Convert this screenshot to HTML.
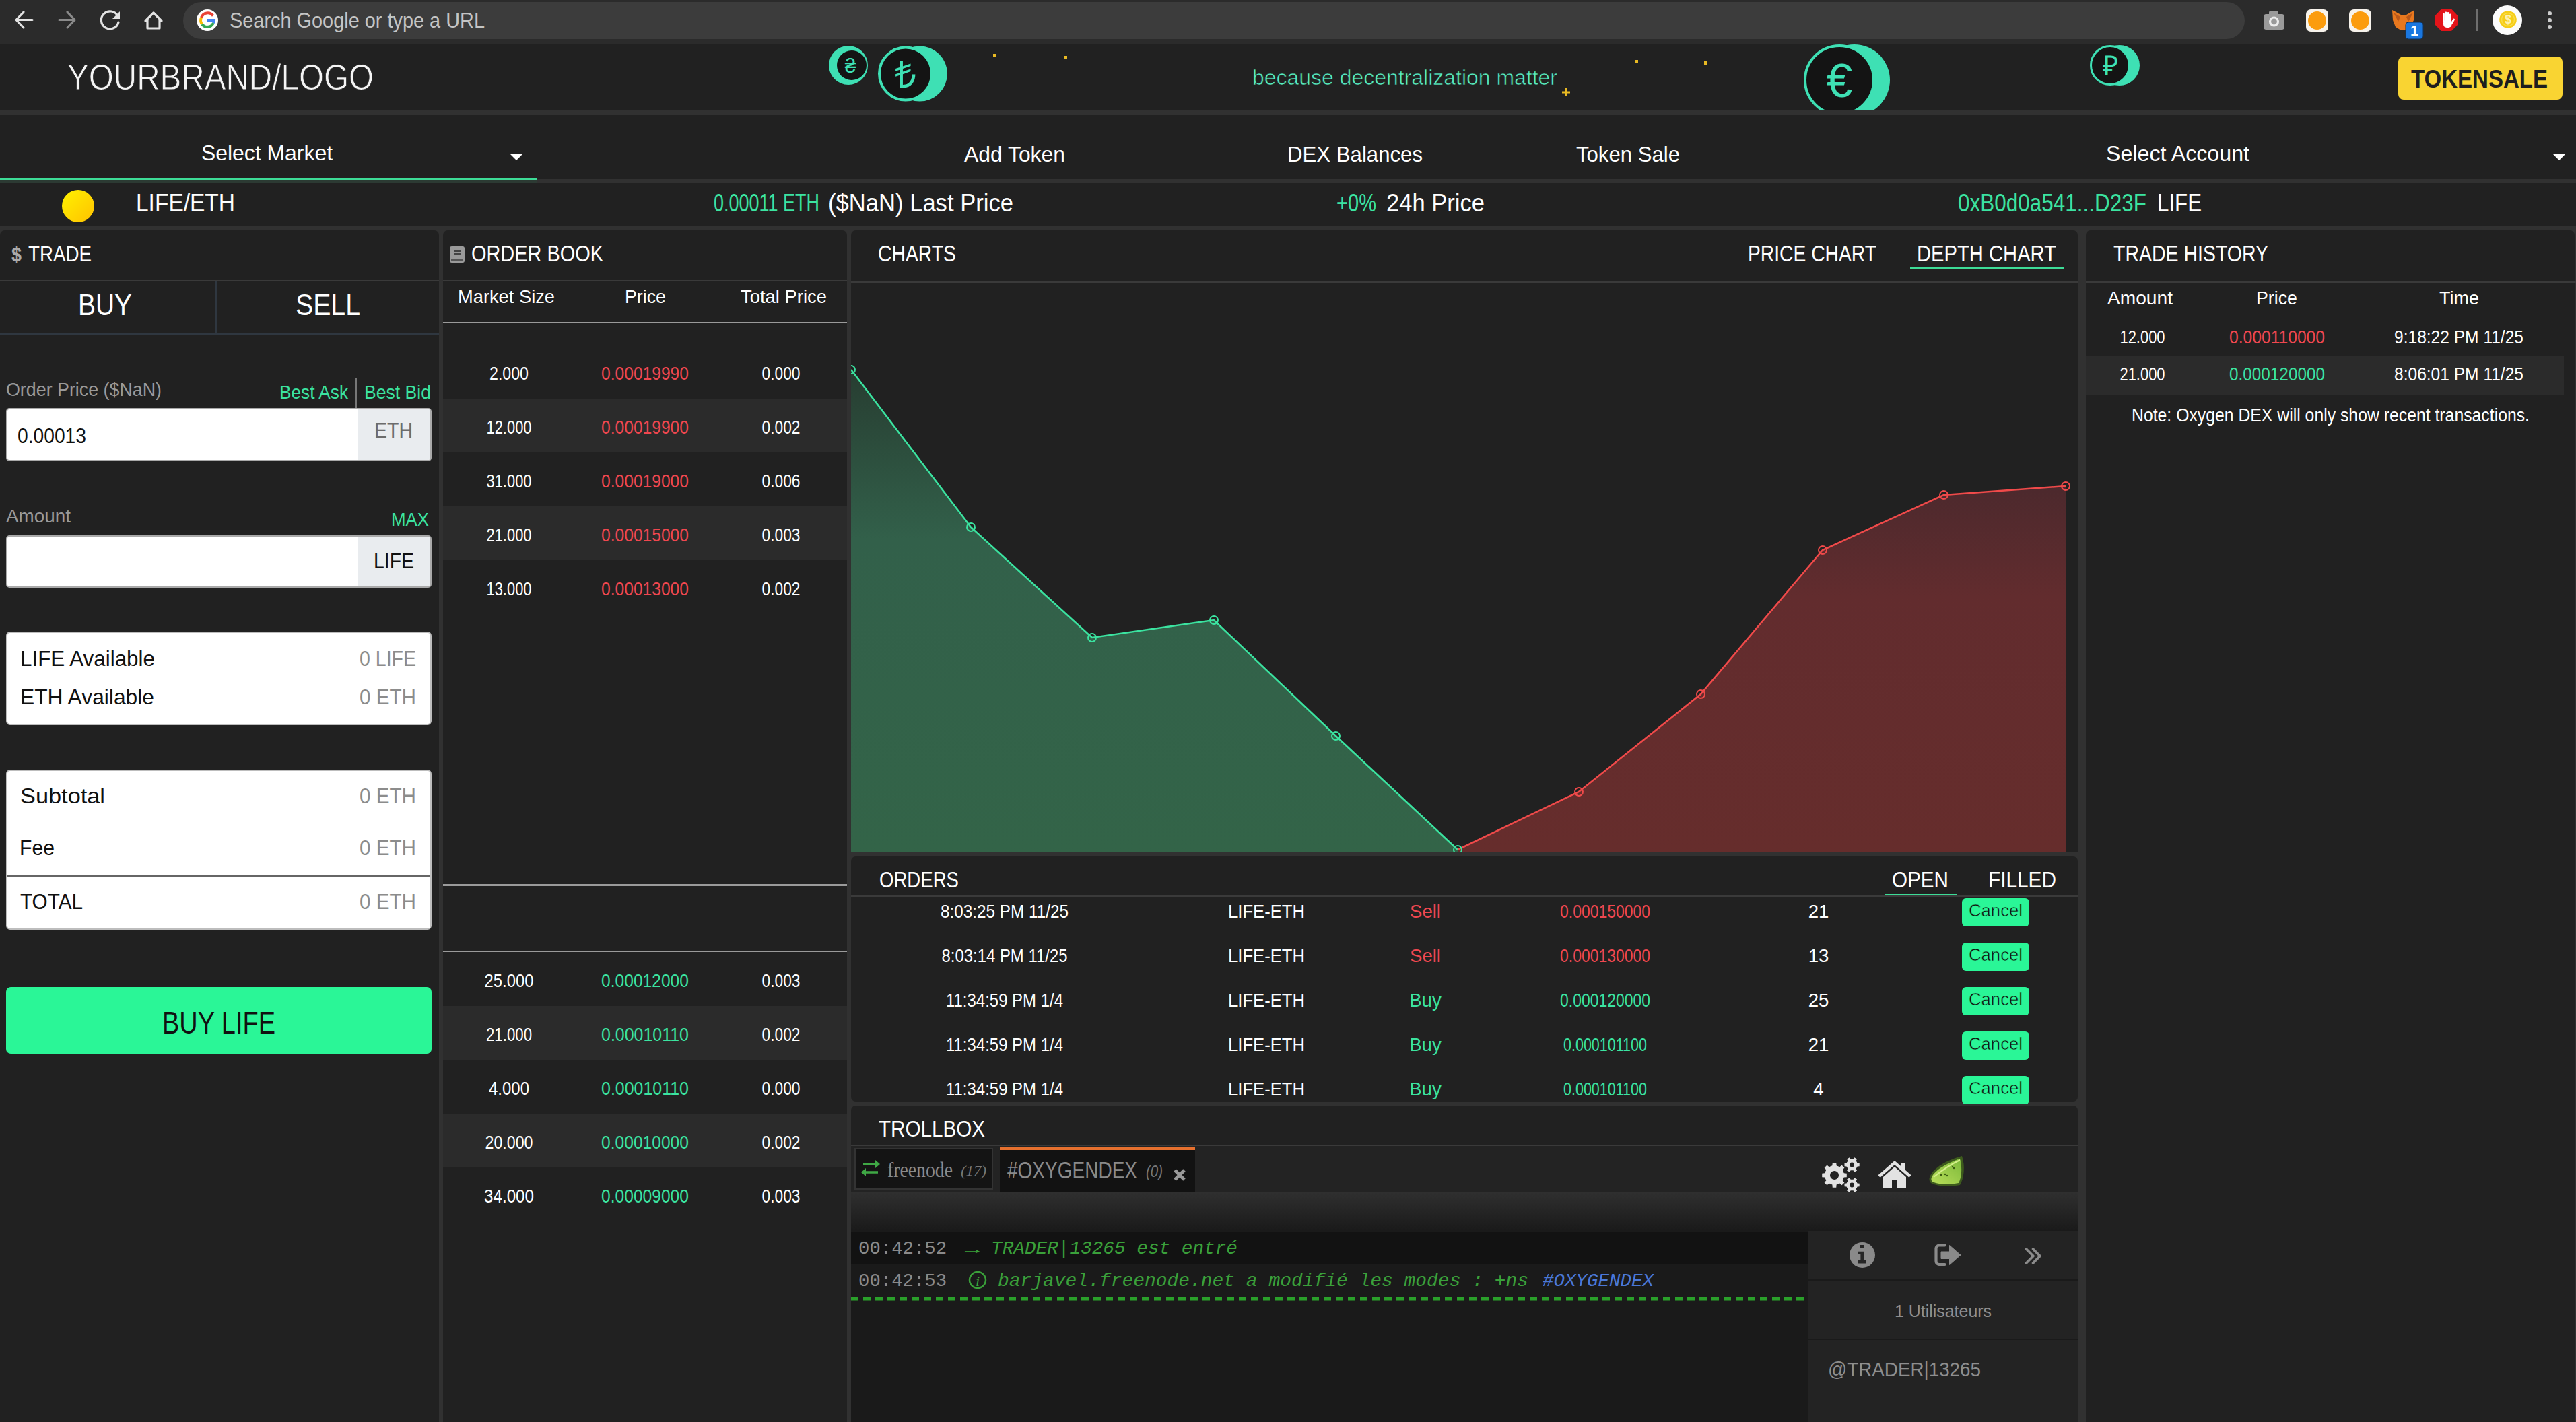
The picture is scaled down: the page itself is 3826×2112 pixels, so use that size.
<!DOCTYPE html>
<html><head><meta charset="utf-8"><title>Oxygen DEX</title>
<style>
html,body{margin:0;padding:0;background:#212121;overflow:hidden}
body{width:3826px;height:2112px;position:relative;font-family:"Liberation Sans",sans-serif}
#ui>div{position:absolute;box-sizing:border-box}
svg.ov{position:absolute;left:0;top:0}
svg text{font-family:"Liberation Sans",sans-serif;white-space:pre}
</style></head><body>
<div id="ui">
<div style="left:0px;top:0px;width:3826px;height:66px;background:#2b2b2b"></div>
<div style="left:272px;top:3px;width:3062px;height:55px;background:#3c3c3c;border-radius:28px"></div>
<div style="left:0px;top:66px;width:3826px;height:98px;background:#212121"></div>
<div style="left:3562px;top:84px;width:244px;height:64px;background:#f9d432;border-radius:8px"></div>
<div style="left:0px;top:164px;width:3826px;height:7px;background:#313131"></div>
<div style="left:0px;top:266px;width:3826px;height:6px;background:#313131"></div>
<div style="left:0px;top:264px;width:798px;height:2.5px;background:#3ddc97"></div>
<div style="left:0px;top:266.5px;width:798px;height:5.5px;background:#2c3a33"></div>
<div style="left:0px;top:336px;width:3826px;height:6px;background:#313131"></div>
<div style="left:0px;top:342px;width:3826px;height:1770px;background:#313131"></div>
<div style="left:0px;top:342px;width:652px;height:1770px;background:#212121;border-radius:7px 7px 0 0"></div>
<div style="left:658px;top:342px;width:600px;height:1770px;background:#212121;border-radius:7px 7px 0 0"></div>
<div style="left:1264px;top:342px;width:1822px;height:924px;background:#212121;border-radius:7px 7px 0 0"></div>
<div style="left:1264px;top:1272px;width:1822px;height:364px;background:#212121;border-radius:7px"></div>
<div style="left:1264px;top:1642px;width:1822px;height:470px;background:#212121;border-radius:7px 7px 0 0"></div>
<div style="left:3098px;top:342px;width:726px;height:1770px;background:#212121;border-radius:7px 7px 0 0"></div>
<div style="left:0px;top:416px;width:652px;height:2px;background:#3a3a3a"></div>
<div style="left:320px;top:418px;width:2px;height:78px;background:#2f3740"></div>
<div style="left:0px;top:495px;width:652px;height:2px;background:#2f3740"></div>
<div style="left:528px;top:562px;width:2px;height:44px;background:#777"></div>
<div style="left:9px;top:606px;width:632px;height:79px;background:#fff;border:2px solid #a9a9a9;border-radius:5px"></div>
<div style="left:532px;top:608px;width:107px;height:75px;background:#e9ecef;border-radius:0 4px 4px 0"></div>
<div style="left:9px;top:795px;width:632px;height:78px;background:#fff;border:2px solid #a9a9a9;border-radius:5px"></div>
<div style="left:532px;top:797px;width:107px;height:74px;background:#e9ecef;border-radius:0 4px 4px 0"></div>
<div style="left:9px;top:938px;width:632px;height:139px;background:#fff;border:2px solid #bdbdbd;border-radius:6px"></div>
<div style="left:9px;top:1143px;width:632px;height:238px;background:#fff;border:2px solid #bdbdbd;border-radius:6px"></div>
<div style="left:11px;top:1300px;width:628px;height:2.5px;background:#666"></div>
<div style="left:9px;top:1466px;width:632px;height:99px;background:#2af697;border-radius:7px"></div>
<div style="left:658px;top:416px;width:600px;height:2px;background:#3a3a3a"></div>
<div style="left:658px;top:477.5px;width:600px;height:2.5px;background:#9a9a9a"></div>
<div style="left:658px;top:592px;width:600px;height:80px;background:#2b2b2b"></div>
<div style="left:658px;top:752px;width:600px;height:80px;background:#2b2b2b"></div>
<div style="left:658px;top:1313px;width:600px;height:2.5px;background:#9a9a9a"></div>
<div style="left:658px;top:1411.5px;width:600px;height:2.5px;background:#9a9a9a"></div>
<div style="left:658px;top:1494px;width:600px;height:80px;background:#2b2b2b"></div>
<div style="left:658px;top:1654px;width:600px;height:80px;background:#2b2b2b"></div>
<div style="left:2837px;top:396px;width:229px;height:3px;background:#3ddc97"></div>
<div style="left:1264px;top:418px;width:1822px;height:2px;background:#3a3a3a"></div>
<div style="left:2799px;top:1327.5px;width:107px;height:2.5px;background:#3ddc97"></div>
<div style="left:1264px;top:1330px;width:1822px;height:2px;background:#3a3a3a"></div>
<div style="left:2914px;top:1334px;width:100px;height:42px;background:#2af697;border-radius:6px"></div>
<div style="left:2914px;top:1400px;width:100px;height:42px;background:#2af697;border-radius:6px"></div>
<div style="left:2914px;top:1466px;width:100px;height:42px;background:#2af697;border-radius:6px"></div>
<div style="left:2914px;top:1532px;width:100px;height:42px;background:#2af697;border-radius:6px"></div>
<div style="left:2914px;top:1598px;width:100px;height:42px;background:#2af697;border-radius:6px"></div>
<div style="left:1264px;top:1700px;width:1822px;height:2.5px;background:#3a3a3a"></div>
<div style="left:1264px;top:1702px;width:1822px;height:69px;background:#232323"></div>
<div style="left:1269px;top:1705px;width:206px;height:62px;background:#141414;border:2px solid #333"></div>
<div style="left:1485px;top:1704px;width:290px;height:67px;background:#121212"></div>
<div style="left:1485px;top:1704px;width:290px;height:4px;background:#e6702e"></div>
<div style="left:1264px;top:1828px;width:1422px;height:284px;background:#1a1a1a"></div>
<div style="left:1264px;top:1830px;width:1422px;height:47px;background:#121212"></div>
<div style="left:2686px;top:1829px;width:400px;height:283px;background:#232323"></div>
<div style="left:2686px;top:1900px;width:400px;height:2px;background:#1a1a1a"></div>
<div style="left:2686px;top:1988px;width:400px;height:2px;background:#1a1a1a"></div>
<div style="left:3098px;top:418px;width:728px;height:2px;background:#3a3a3a"></div>
<div style="left:3098px;top:528px;width:710px;height:59px;background:#2b2b2b"></div>
</div>
<svg class="ov" width="3826" height="2112" viewBox="0 0 3826 2112">
<g fill="none" stroke-linecap="round" stroke-linejoin="round" stroke-width="3.2"><path d="M48 29.5H25M35 18L24 29.5L35 41" stroke="#e3e3e3"/><path d="M88 29.5H111M100 18L111 29.5L100 41" stroke="#8a8a8a"/><path d="M175 24A13 13 0 1 0 176 33" stroke="#e3e3e3"/><path d="M216 31L228 19L240 31M219 28V42H237V28" stroke="#e3e3e3"/></g><path d="M178 17V28H167Z" fill="#e3e3e3"/>
<circle cx="308" cy="30" r="16" fill="#fff"/><g fill="none" stroke-width="4"><path d="M316.5 23.5A10 10 0 0 0 299 26" stroke="#ea4335"/><path d="M299 26A10 10 0 0 0 300 36" stroke="#fbbc05"/><path d="M300 36A10 10 0 0 0 317 34" stroke="#34a853"/><path d="M317 34A10 10 0 0 0 318 30H308" stroke="#4285f4"/></g>
<text x="341" y="41" font-size="31.98" fill="#c4c4c4" textLength="379" lengthAdjust="spacingAndGlyphs" >Search Google or type a URL</text>
<g><rect x="3362" y="21" width="31" height="23" rx="4" fill="#9a9a9a"/><rect x="3370" y="16" width="14" height="8" rx="3" fill="#9a9a9a"/><circle cx="3377.5" cy="32" r="6" fill="#9a9a9a" stroke="#ececec" stroke-width="3.2"/><rect x="3425" y="14" width="33" height="33" rx="7" fill="#f7f3ec"/><circle cx="3441.5" cy="30.5" r="13.5" fill="#fb9c0e"/><rect x="3489" y="14" width="33" height="33" rx="7" fill="#f7f3ec"/><circle cx="3505.5" cy="30.5" r="13.5" fill="#fb9c0e"/><path d="M3553 15L3566 22H3574L3586 15L3585 30L3580 40L3572 45H3566L3558 40L3554 30Z" fill="#e8781e"/><path d="M3555 19L3565 25L3562 32Z" fill="#b9581a"/><path d="M3584 19L3574 25L3577 32Z" fill="#b9581a"/><rect x="3573" y="33" width="26" height="25" rx="4" fill="#1a77e0" stroke="#11345c" stroke-width="1"/><path d="M3617 23L3626 13.5H3641L3650 23V37L3641 46H3626L3617 37Z" fill="#e3141a"/><g stroke="#fff" stroke-width="2.8" stroke-linecap="round"><path d="M3629.5 21V32"/><path d="M3632.8 19V32"/><path d="M3636.1 19.5V32"/><path d="M3639.2 22V33"/><path d="M3641 35L3644.5 29"/></g><rect x="3629" y="29" width="12.5" height="12" rx="5" fill="#fff"/><rect x="3678" y="14" width="2" height="32" fill="#6e6e6e"/><circle cx="3724" cy="30" r="22" fill="#fbfbfb"/><circle cx="3725" cy="29" r="12.8" fill="#f6cd17"/><circle cx="3725" cy="29" r="9.5" fill="none" stroke="#f9dc4a" stroke-width="1.5"/><circle cx="3787" cy="20" r="3" fill="#ccc"/><circle cx="3787" cy="30" r="3" fill="#ccc"/><circle cx="3787" cy="40" r="3" fill="#ccc"/></g>
<text x="3586" y="53" font-size="21.80" fill="#fff" font-weight="700" text-anchor="middle" >1</text>
<text x="3725" y="35" font-size="17.44" fill="#fdf1b0" font-weight="700" text-anchor="middle" >$</text>
<text x="100" y="133" font-size="53.78" fill="#f4f4f4" textLength="455" lengthAdjust="spacingAndGlyphs" stroke="#212121" stroke-width="0.8">YOURBRAND/LOGO</text>
<text x="1860" y="126" font-size="31.00" fill="#56ecbf" textLength="453" lengthAdjust="spacingAndGlyphs" stroke="#212121" stroke-width="0.6">because decentralization matter</text>
<text x="3581" y="130" font-size="37.06" fill="#1e1e1e" font-weight="700" textLength="203" lengthAdjust="spacingAndGlyphs" >TOKENSALE</text>
<text x="299" y="238" font-size="31.98" fill="#fff" textLength="195" lengthAdjust="spacingAndGlyphs" >Select Market</text>
<path d="M757 228H777L767 238Z" fill="#fff"/>
<text x="1432" y="240" font-size="31.98" fill="#fff" textLength="150" lengthAdjust="spacingAndGlyphs" >Add Token</text>
<text x="1912" y="240" font-size="31.98" fill="#fff" textLength="201" lengthAdjust="spacingAndGlyphs" >DEX Balances</text>
<text x="2341" y="240" font-size="31.98" fill="#fff" textLength="154" lengthAdjust="spacingAndGlyphs" >Token Sale</text>
<text x="3128" y="239" font-size="31.98" fill="#fff" textLength="213" lengthAdjust="spacingAndGlyphs" >Select Account</text>
<path d="M3792 229H3810L3801 238Z" fill="#fff"/>
<defs><linearGradient id="yel" x1="0" y1="0" x2="1" y2="1"><stop offset="0" stop-color="#fff200"/><stop offset="1" stop-color="#ffc200"/></linearGradient></defs><circle cx="116" cy="306" r="24" fill="url(#yel)"/>
<text x="202" y="314" font-size="36.34" fill="#fff" textLength="147" lengthAdjust="spacingAndGlyphs" >LIFE/ETH</text>
<text x="1060" y="314" font-size="36.34" fill="#3be3a0" textLength="157" lengthAdjust="spacingAndGlyphs" >0.00011 ETH</text>
<text x="1230" y="314" font-size="36.34" fill="#fff" textLength="275" lengthAdjust="spacingAndGlyphs" >($NaN) Last Price</text>
<text x="1985" y="314" font-size="36.34" fill="#3be3a0" textLength="59" lengthAdjust="spacingAndGlyphs" >+0%</text>
<text x="2059" y="314" font-size="36.34" fill="#fff" textLength="146" lengthAdjust="spacingAndGlyphs" >24h Price</text>
<text x="2908" y="314" font-size="36.34" fill="#3be3a0" textLength="280" lengthAdjust="spacingAndGlyphs" >0xB0d0a541...D23F</text>
<text x="3204" y="314" font-size="36.34" fill="#fff" textLength="66" lengthAdjust="spacingAndGlyphs" >LIFE</text>
<text x="17" y="388" font-size="29.07" fill="#aaa" font-weight="700" textLength="15" lengthAdjust="spacingAndGlyphs" >$</text>
<text x="42" y="388" font-size="31.98" fill="#fff" textLength="94" lengthAdjust="spacingAndGlyphs" >TRADE</text>
<text x="116" y="468" font-size="43.60" fill="#fff" textLength="80" lengthAdjust="spacingAndGlyphs" >BUY</text>
<text x="439" y="468" font-size="43.60" fill="#fff" textLength="96" lengthAdjust="spacingAndGlyphs" >SELL</text>
<text x="9" y="588" font-size="28.34" fill="#9a9a9a" textLength="231" lengthAdjust="spacingAndGlyphs" >Order Price ($NaN)</text>
<text x="415" y="592" font-size="28.34" fill="#3be3a0" textLength="102" lengthAdjust="spacingAndGlyphs" >Best Ask</text>
<text x="541" y="592" font-size="28.34" fill="#3be3a0" textLength="99" lengthAdjust="spacingAndGlyphs" >Best Bid</text>
<text x="26" y="658" font-size="31.98" fill="#111" textLength="102" lengthAdjust="spacingAndGlyphs" >0.00013</text>
<text x="556" y="650" font-size="31.98" fill="#6c6c6c" textLength="57" lengthAdjust="spacingAndGlyphs" >ETH</text>
<text x="9" y="776" font-size="28.34" fill="#9a9a9a" textLength="96" lengthAdjust="spacingAndGlyphs" >Amount</text>
<text x="581" y="781" font-size="28.34" fill="#3be3a0" textLength="56" lengthAdjust="spacingAndGlyphs" >MAX</text>
<text x="555" y="844" font-size="31.98" fill="#111" textLength="60" lengthAdjust="spacingAndGlyphs" >LIFE</text>
<text x="30" y="989" font-size="31.98" fill="#111" textLength="200" lengthAdjust="spacingAndGlyphs" >LIFE Available</text>
<text x="534" y="989" font-size="31.98" fill="#8c8c8c" textLength="84" lengthAdjust="spacingAndGlyphs" >0 LIFE</text>
<text x="30" y="1046" font-size="31.98" fill="#111" textLength="199" lengthAdjust="spacingAndGlyphs" >ETH Available</text>
<text x="534" y="1046" font-size="31.98" fill="#8c8c8c" textLength="84" lengthAdjust="spacingAndGlyphs" >0 ETH</text>
<text x="30" y="1193" font-size="31.98" fill="#111" textLength="126" lengthAdjust="spacingAndGlyphs" >Subtotal</text>
<text x="534" y="1193" font-size="31.98" fill="#8c8c8c" textLength="84" lengthAdjust="spacingAndGlyphs" >0 ETH</text>
<text x="29" y="1270" font-size="31.98" fill="#111" textLength="52" lengthAdjust="spacingAndGlyphs" >Fee</text>
<text x="534" y="1270" font-size="31.98" fill="#8c8c8c" textLength="84" lengthAdjust="spacingAndGlyphs" >0 ETH</text>
<text x="30" y="1350" font-size="31.98" fill="#111" textLength="93" lengthAdjust="spacingAndGlyphs" >TOTAL</text>
<text x="534" y="1350" font-size="31.98" fill="#8c8c8c" textLength="84" lengthAdjust="spacingAndGlyphs" >0 ETH</text>
<text x="241" y="1535" font-size="46.51" fill="#111" textLength="168" lengthAdjust="spacingAndGlyphs" >BUY LIFE</text>
<rect x="668" y="366" width="22" height="24" rx="3" fill="#9a9a9a"/><rect x="674" y="372" width="10" height="2" fill="#444"/><rect x="674" y="376" width="10" height="2" fill="#444"/><rect x="670" y="384" width="18" height="3" fill="#555"/>
<text x="700" y="388" font-size="32.70" fill="#fff" textLength="196" lengthAdjust="spacingAndGlyphs" >ORDER BOOK</text>
<text x="680" y="450" font-size="27.62" fill="#fff" textLength="144" lengthAdjust="spacingAndGlyphs" >Market Size</text>
<text x="928" y="450" font-size="27.62" fill="#fff" textLength="61" lengthAdjust="spacingAndGlyphs" >Price</text>
<text x="1100" y="450" font-size="27.62" fill="#fff" textLength="128" lengthAdjust="spacingAndGlyphs" >Total Price</text>
<text x="756" y="564" font-size="27.62" fill="#fff" text-anchor="middle" textLength="58" lengthAdjust="spacingAndGlyphs" >2.000</text>
<text x="958" y="564" font-size="27.62" fill="#f0474f" text-anchor="middle" textLength="130" lengthAdjust="spacingAndGlyphs" >0.00019990</text>
<text x="1160" y="564" font-size="27.62" fill="#fff" text-anchor="middle" textLength="57" lengthAdjust="spacingAndGlyphs" >0.000</text>
<text x="756" y="644" font-size="27.62" fill="#fff" text-anchor="middle" textLength="67" lengthAdjust="spacingAndGlyphs" >12.000</text>
<text x="958" y="644" font-size="27.62" fill="#f0474f" text-anchor="middle" textLength="130" lengthAdjust="spacingAndGlyphs" >0.00019900</text>
<text x="1160" y="644" font-size="27.62" fill="#fff" text-anchor="middle" textLength="57" lengthAdjust="spacingAndGlyphs" >0.002</text>
<text x="756" y="724" font-size="27.62" fill="#fff" text-anchor="middle" textLength="67" lengthAdjust="spacingAndGlyphs" >31.000</text>
<text x="958" y="724" font-size="27.62" fill="#f0474f" text-anchor="middle" textLength="130" lengthAdjust="spacingAndGlyphs" >0.00019000</text>
<text x="1160" y="724" font-size="27.62" fill="#fff" text-anchor="middle" textLength="57" lengthAdjust="spacingAndGlyphs" >0.006</text>
<text x="756" y="804" font-size="27.62" fill="#fff" text-anchor="middle" textLength="67" lengthAdjust="spacingAndGlyphs" >21.000</text>
<text x="958" y="804" font-size="27.62" fill="#f0474f" text-anchor="middle" textLength="130" lengthAdjust="spacingAndGlyphs" >0.00015000</text>
<text x="1160" y="804" font-size="27.62" fill="#fff" text-anchor="middle" textLength="57" lengthAdjust="spacingAndGlyphs" >0.003</text>
<text x="756" y="884" font-size="27.62" fill="#fff" text-anchor="middle" textLength="67" lengthAdjust="spacingAndGlyphs" >13.000</text>
<text x="958" y="884" font-size="27.62" fill="#f0474f" text-anchor="middle" textLength="130" lengthAdjust="spacingAndGlyphs" >0.00013000</text>
<text x="1160" y="884" font-size="27.62" fill="#fff" text-anchor="middle" textLength="57" lengthAdjust="spacingAndGlyphs" >0.002</text>
<text x="756" y="1466" font-size="27.62" fill="#fff" text-anchor="middle" textLength="73" lengthAdjust="spacingAndGlyphs" >25.000</text>
<text x="958" y="1466" font-size="27.62" fill="#3be3a0" text-anchor="middle" textLength="130" lengthAdjust="spacingAndGlyphs" >0.00012000</text>
<text x="1160" y="1466" font-size="27.62" fill="#fff" text-anchor="middle" textLength="57" lengthAdjust="spacingAndGlyphs" >0.003</text>
<text x="756" y="1546" font-size="27.62" fill="#fff" text-anchor="middle" textLength="68" lengthAdjust="spacingAndGlyphs" >21.000</text>
<text x="958" y="1546" font-size="27.62" fill="#3be3a0" text-anchor="middle" textLength="130" lengthAdjust="spacingAndGlyphs" >0.00010110</text>
<text x="1160" y="1546" font-size="27.62" fill="#fff" text-anchor="middle" textLength="57" lengthAdjust="spacingAndGlyphs" >0.002</text>
<text x="756" y="1626" font-size="27.62" fill="#fff" text-anchor="middle" textLength="60" lengthAdjust="spacingAndGlyphs" >4.000</text>
<text x="958" y="1626" font-size="27.62" fill="#3be3a0" text-anchor="middle" textLength="130" lengthAdjust="spacingAndGlyphs" >0.00010110</text>
<text x="1160" y="1626" font-size="27.62" fill="#fff" text-anchor="middle" textLength="57" lengthAdjust="spacingAndGlyphs" >0.000</text>
<text x="756" y="1706" font-size="27.62" fill="#fff" text-anchor="middle" textLength="71" lengthAdjust="spacingAndGlyphs" >20.000</text>
<text x="958" y="1706" font-size="27.62" fill="#3be3a0" text-anchor="middle" textLength="130" lengthAdjust="spacingAndGlyphs" >0.00010000</text>
<text x="1160" y="1706" font-size="27.62" fill="#fff" text-anchor="middle" textLength="57" lengthAdjust="spacingAndGlyphs" >0.002</text>
<text x="756" y="1786" font-size="27.62" fill="#fff" text-anchor="middle" textLength="74" lengthAdjust="spacingAndGlyphs" >34.000</text>
<text x="958" y="1786" font-size="27.62" fill="#3be3a0" text-anchor="middle" textLength="130" lengthAdjust="spacingAndGlyphs" >0.00009000</text>
<text x="1160" y="1786" font-size="27.62" fill="#fff" text-anchor="middle" textLength="57" lengthAdjust="spacingAndGlyphs" >0.003</text>
<text x="1304" y="388" font-size="32.70" fill="#fff" textLength="116" lengthAdjust="spacingAndGlyphs" >CHARTS</text>
<text x="2596" y="388" font-size="32.70" fill="#fff" textLength="191" lengthAdjust="spacingAndGlyphs" >PRICE CHART</text>
<text x="2847" y="388" font-size="32.70" fill="#fff" textLength="207" lengthAdjust="spacingAndGlyphs" >DEPTH CHART</text>
<defs><linearGradient id="gf" gradientUnits="userSpaceOnUse" x1="0" y1="549" x2="0" y2="1266"><stop offset="0" stop-color="#273d31"/><stop offset="0.35" stop-color="#32604a"/><stop offset="1" stop-color="#336448"/></linearGradient><linearGradient id="rf" gradientUnits="userSpaceOnUse" x1="0" y1="722" x2="0" y2="1266"><stop offset="0" stop-color="#4c292d"/><stop offset="0.3" stop-color="#622c2e"/><stop offset="1" stop-color="#662d2c"/></linearGradient></defs>
<defs><clipPath id="chartclip"><rect x="1264" y="420" width="1822" height="846"/></clipPath></defs><g clip-path="url(#chartclip)">
<polygon points="1264,549 1442,783 1622,947 1803,921 1984,1093 2165,1262 2165,1266 1264,1266" fill="url(#gf)"/>
<polygon points="2165,1262 2345,1176 2526,1031 2707,817 2887,735 3068,722 3068,1266 2165,1266" fill="url(#rf)"/>
<polyline points="1264,549 1442,783 1622,947 1803,921 1984,1093 2165,1262" fill="none" stroke="#3be3a0" stroke-width="2.5"/>
<polyline points="2165,1262 2345,1176 2526,1031 2707,817 2887,735 3068,722" fill="none" stroke="#f04a4a" stroke-width="2.5"/>
<circle cx="1264" cy="549" r="6" fill="none" stroke="#3be3a0" stroke-width="2"/>
<circle cx="1442" cy="783" r="6" fill="none" stroke="#3be3a0" stroke-width="2"/>
<circle cx="1622" cy="947" r="6" fill="none" stroke="#3be3a0" stroke-width="2"/>
<circle cx="1803" cy="921" r="6" fill="none" stroke="#3be3a0" stroke-width="2"/>
<circle cx="1984" cy="1093" r="6" fill="none" stroke="#3be3a0" stroke-width="2"/>
<circle cx="2165" cy="1262" r="6" fill="none" stroke="#3be3a0" stroke-width="2"/>
<circle cx="2345" cy="1176" r="6" fill="none" stroke="#f04a4a" stroke-width="2"/>
<circle cx="2526" cy="1031" r="6" fill="none" stroke="#f04a4a" stroke-width="2"/>
<circle cx="2707" cy="817" r="6" fill="none" stroke="#f04a4a" stroke-width="2"/>
<circle cx="2887" cy="735" r="6" fill="none" stroke="#f04a4a" stroke-width="2"/>
<circle cx="3068" cy="722" r="6" fill="none" stroke="#f04a4a" stroke-width="2"/>
</g>
<text x="1306" y="1318" font-size="33.43" fill="#fff" textLength="118" lengthAdjust="spacingAndGlyphs" >ORDERS</text>
<text x="2810" y="1318" font-size="33.43" fill="#fff" textLength="84" lengthAdjust="spacingAndGlyphs" >OPEN</text>
<text x="2953" y="1318" font-size="33.43" fill="#fff" textLength="101" lengthAdjust="spacingAndGlyphs" >FILLED</text>
<text x="1492" y="1363" font-size="27.62" fill="#fff" text-anchor="middle" textLength="190" lengthAdjust="spacingAndGlyphs" >8:03:25 PM 11/25</text>
<text x="1881" y="1363" font-size="27.62" fill="#fff" text-anchor="middle" textLength="114" lengthAdjust="spacingAndGlyphs" >LIFE-ETH</text>
<text x="2117" y="1363" font-size="27.62" fill="#f0474f" text-anchor="middle" >Sell</text>
<text x="2384" y="1363" font-size="27.62" fill="#f0474f" text-anchor="middle" textLength="134" lengthAdjust="spacingAndGlyphs" >0.000150000</text>
<text x="2701" y="1363" font-size="27.62" fill="#fff" text-anchor="middle" >21</text>
<text x="2964" y="1361" font-size="26.16" fill="#111" text-anchor="middle" textLength="80" lengthAdjust="spacingAndGlyphs" stroke="#2af697" stroke-width="0.5">Cancel</text>
<text x="1492" y="1429" font-size="27.62" fill="#fff" text-anchor="middle" textLength="187" lengthAdjust="spacingAndGlyphs" >8:03:14 PM 11/25</text>
<text x="1881" y="1429" font-size="27.62" fill="#fff" text-anchor="middle" textLength="114" lengthAdjust="spacingAndGlyphs" >LIFE-ETH</text>
<text x="2117" y="1429" font-size="27.62" fill="#f0474f" text-anchor="middle" >Sell</text>
<text x="2384" y="1429" font-size="27.62" fill="#f0474f" text-anchor="middle" textLength="134" lengthAdjust="spacingAndGlyphs" >0.000130000</text>
<text x="2701" y="1429" font-size="27.62" fill="#fff" text-anchor="middle" >13</text>
<text x="2964" y="1427" font-size="26.16" fill="#111" text-anchor="middle" textLength="80" lengthAdjust="spacingAndGlyphs" stroke="#2af697" stroke-width="0.5">Cancel</text>
<text x="1492" y="1495" font-size="27.62" fill="#fff" text-anchor="middle" textLength="174" lengthAdjust="spacingAndGlyphs" >11:34:59 PM 1/4</text>
<text x="1881" y="1495" font-size="27.62" fill="#fff" text-anchor="middle" textLength="114" lengthAdjust="spacingAndGlyphs" >LIFE-ETH</text>
<text x="2117" y="1495" font-size="27.62" fill="#3be3a0" text-anchor="middle" >Buy</text>
<text x="2384" y="1495" font-size="27.62" fill="#3be3a0" text-anchor="middle" textLength="134" lengthAdjust="spacingAndGlyphs" >0.000120000</text>
<text x="2701" y="1495" font-size="27.62" fill="#fff" text-anchor="middle" >25</text>
<text x="2964" y="1493" font-size="26.16" fill="#111" text-anchor="middle" textLength="80" lengthAdjust="spacingAndGlyphs" stroke="#2af697" stroke-width="0.5">Cancel</text>
<text x="1492" y="1561" font-size="27.62" fill="#fff" text-anchor="middle" textLength="174" lengthAdjust="spacingAndGlyphs" >11:34:59 PM 1/4</text>
<text x="1881" y="1561" font-size="27.62" fill="#fff" text-anchor="middle" textLength="114" lengthAdjust="spacingAndGlyphs" >LIFE-ETH</text>
<text x="2117" y="1561" font-size="27.62" fill="#3be3a0" text-anchor="middle" >Buy</text>
<text x="2384" y="1561" font-size="27.62" fill="#3be3a0" text-anchor="middle" textLength="124" lengthAdjust="spacingAndGlyphs" >0.000101100</text>
<text x="2701" y="1561" font-size="27.62" fill="#fff" text-anchor="middle" >21</text>
<text x="2964" y="1559" font-size="26.16" fill="#111" text-anchor="middle" textLength="80" lengthAdjust="spacingAndGlyphs" stroke="#2af697" stroke-width="0.5">Cancel</text>
<text x="1492" y="1627" font-size="27.62" fill="#fff" text-anchor="middle" textLength="174" lengthAdjust="spacingAndGlyphs" >11:34:59 PM 1/4</text>
<text x="1881" y="1627" font-size="27.62" fill="#fff" text-anchor="middle" textLength="114" lengthAdjust="spacingAndGlyphs" >LIFE-ETH</text>
<text x="2117" y="1627" font-size="27.62" fill="#3be3a0" text-anchor="middle" >Buy</text>
<text x="2384" y="1627" font-size="27.62" fill="#3be3a0" text-anchor="middle" textLength="124" lengthAdjust="spacingAndGlyphs" >0.000101100</text>
<text x="2701" y="1627" font-size="27.62" fill="#fff" text-anchor="middle" >4</text>
<text x="2964" y="1625" font-size="26.16" fill="#111" text-anchor="middle" textLength="80" lengthAdjust="spacingAndGlyphs" stroke="#2af697" stroke-width="0.5">Cancel</text>
<text x="1305" y="1688" font-size="32.70" fill="#fff" textLength="158" lengthAdjust="spacingAndGlyphs" >TROLLBOX</text>
<g stroke="#3fa845" stroke-width="3.5" fill="#3fa845"><path d="M1282 1729H1305"/><path d="M1281 1741H1304"/></g><path d="M1300 1723L1307 1729L1300 1735Z" fill="#3fa845"/><path d="M1286 1735L1279 1741L1286 1747Z" fill="#3fa845"/>
<text x="1318" y="1748" font-size="31.00" fill="#8a8a8a" style='font-family:"Liberation Serif", serif' textLength="97" lengthAdjust="spacingAndGlyphs" >freenode</text>
<text x="1427" y="1746" font-size="22.00" fill="#777" style='font-family:"Liberation Serif", serif' font-style="italic" textLength="38" lengthAdjust="spacingAndGlyphs" >(17)</text>
<text x="1496" y="1750" font-size="34.88" fill="#8a8a8a" textLength="193" lengthAdjust="spacingAndGlyphs" >#OXYGENDEX</text>
<text x="1702" y="1748" font-size="24.00" fill="#777" font-style="italic" textLength="25" lengthAdjust="spacingAndGlyphs" >(0)</text>
<path d="M1745 1738L1759 1752M1759 1738L1745 1752" stroke="#999" stroke-width="5"/>
<defs><linearGradient id="tb" x1="0" y1="0" x2="0" y2="1"><stop offset="0" stop-color="#2f2f2f"/><stop offset="1" stop-color="#1a1a1a"/></linearGradient></defs>
<rect x="1264" y="1771" width="1822" height="57" fill="url(#tb)"/>
<text x="1275" y="1862" font-size="28.00" fill="#8a8a8a" style='font-family:"Liberation Mono", monospace' textLength="131" lengthAdjust="spacingAndGlyphs" >00:42:52</text>
<text x="1444" y="1862" font-size="20.00" fill="#3aa03a" style='font-family:"Liberation Mono", monospace' text-anchor="middle" textLength="22" lengthAdjust="spacingAndGlyphs" >→</text>
<text x="1472" y="1862" font-size="28.00" fill="#3aa03a" style='font-family:"Liberation Mono", monospace' font-style="italic" textLength="366" lengthAdjust="spacingAndGlyphs" >TRADER|13265 est entré</text>
<text x="1275" y="1910" font-size="28.00" fill="#8a8a8a" style='font-family:"Liberation Mono", monospace' textLength="131" lengthAdjust="spacingAndGlyphs" >00:42:53</text>
<circle cx="1452" cy="1901" r="12" fill="none" stroke="#3aa03a" stroke-width="2.5"/>
<text x="1452" y="1910" font-size="22.00" fill="#3aa03a" style='font-family:"Liberation Serif", serif' font-style="italic" text-anchor="middle" >i</text>
<text x="1482" y="1910" font-size="28.00" fill="#3aa03a" style='font-family:"Liberation Mono", monospace' font-style="italic" textLength="788" lengthAdjust="spacingAndGlyphs" >barjavel.freenode.net a modifié les modes : +ns</text>
<text x="2291" y="1910" font-size="28.00" fill="#4a78d8" style='font-family:"Liberation Mono", monospace' font-style="italic" textLength="165" lengthAdjust="spacingAndGlyphs" >#OXYGENDEX</text>
<line x1="1264" y1="1929" x2="2686" y2="1929" stroke="#2aa02a" stroke-width="5" stroke-dasharray="11 7"/>
<circle cx="2766" cy="1864" r="19" fill="#8a8a8a"/><rect x="2762.8" y="1849" width="6.2" height="4.8" fill="#262626"/><path d="M2759.8 1858.7H2768.8V1872H2771.6V1876.6H2759.8V1872H2763.4V1862.5H2759.8Z" fill="#262626"/>
<path d="M2888.5 1849.5H2880A5 5 0 0 0 2875.5 1854.5V1873A5 5 0 0 0 2880 1878H2888.5" fill="none" stroke="#8a8a8a" stroke-width="4.2" stroke-linecap="round"/><path d="M2883 1859H2895.5V1849.5L2912 1864L2895.5 1878.5V1869.5H2883Z" fill="#8a8a8a" stroke="#8a8a8a" stroke-width="1" stroke-linejoin="round"/>
<path d="M3009.5 1855L3020 1865.5L3009.5 1876M3019.5 1855L3030 1865.5L3019.5 1876" fill="none" stroke="#8a8a8a" stroke-width="3.8" stroke-linecap="round" stroke-linejoin="round"/>
<text x="2814" y="1956" font-size="25.00" fill="#8e8e8e" textLength="144" lengthAdjust="spacingAndGlyphs" >1 Utilisateurs</text>
<text x="2715" y="2044" font-size="30.00" fill="#8e8e8e" textLength="227" lengthAdjust="spacingAndGlyphs" >@TRADER|13265</text>
<polygon points="2738.66,1742.29 2742.79,1742.65 2742.79,1748.15 2738.66,1748.51 2736.71,1753.22 2739.38,1756.39 2735.49,1760.28 2732.32,1757.61 2727.61,1759.56 2727.25,1763.69 2721.75,1763.69 2721.39,1759.56 2716.68,1757.61 2713.51,1760.28 2709.62,1756.39 2712.29,1753.22 2710.34,1748.51 2706.21,1748.15 2706.21,1742.65 2710.34,1742.29 2712.29,1737.58 2709.62,1734.41 2713.51,1730.52 2716.68,1733.19 2721.39,1731.24 2721.75,1727.11 2727.25,1727.11 2727.61,1731.24 2732.32,1733.19 2735.49,1730.52 2739.38,1734.41 2736.71,1737.58" fill="#e2e2e2"/><circle cx="2724.5" cy="1745.4" r="14.0" fill="#e2e2e2"/><circle cx="2724.5" cy="1745.4" r="6.5" fill="#232323"/>
<polygon points="2758.65,1727.61 2761.68,1727.77 2761.68,1732.23 2758.65,1732.39 2756.69,1735.78 2758.07,1738.48 2754.20,1740.71 2752.56,1738.17 2748.64,1738.17 2747.00,1740.71 2743.13,1738.48 2744.51,1735.78 2742.55,1732.39 2739.52,1732.23 2739.52,1727.77 2742.55,1727.61 2744.51,1724.22 2743.13,1721.52 2747.00,1719.29 2748.64,1721.83 2752.56,1721.83 2754.20,1719.29 2758.07,1721.52 2756.69,1724.22" fill="#e2e2e2"/><circle cx="2750.6" cy="1730" r="7.9" fill="#e2e2e2"/><circle cx="2750.6" cy="1730" r="3.4" fill="#232323"/>
<polygon points="2758.65,1757.61 2761.68,1757.77 2761.68,1762.23 2758.65,1762.39 2756.69,1765.78 2758.07,1768.48 2754.20,1770.71 2752.56,1768.17 2748.64,1768.17 2747.00,1770.71 2743.13,1768.48 2744.51,1765.78 2742.55,1762.39 2739.52,1762.23 2739.52,1757.77 2742.55,1757.61 2744.51,1754.22 2743.13,1751.52 2747.00,1749.29 2748.64,1751.83 2752.56,1751.83 2754.20,1749.29 2758.07,1751.52 2756.69,1754.22" fill="#e2e2e2"/><circle cx="2750.6" cy="1760" r="7.9" fill="#e2e2e2"/><circle cx="2750.6" cy="1760" r="3.4" fill="#232323"/>
<path d="M2791 1747L2814 1727L2837 1747" fill="none" stroke="#e2e2e2" stroke-width="4.5" stroke-linejoin="miter"/><rect x="2824" y="1727" width="6" height="12" fill="#e2e2e2"/><path d="M2797 1748L2814 1733L2831 1748V1764H2817V1753H2810V1764H2797Z" fill="#e2e2e2"/>
<defs><linearGradient id="kiwi" x1="0" y1="1" x2="1" y2="0"><stop offset="0" stop-color="#b9df5a"/><stop offset="1" stop-color="#7cb83a"/></linearGradient></defs><path d="M2868 1757C2860 1750 2872 1735 2890 1726C2900 1721 2910 1718 2914 1717C2919 1732 2917 1750 2911 1760C2895 1763 2876 1762 2868 1757Z" fill="#3d5a1d"/><path d="M2870 1755C2864 1749 2876 1737 2892 1729C2900 1725 2907 1722 2911 1721C2915 1735 2913 1750 2909 1757C2894 1760 2877 1759 2870 1755Z" fill="url(#kiwi)"/><path d="M2872 1748C2886 1737 2900 1728 2911 1723" stroke="#d4ef8a" stroke-width="2" fill="none"/><g fill="#3b5c12"><circle cx="2883" cy="1745" r="1.2"/><circle cx="2889" cy="1744" r="1.2"/><circle cx="2892" cy="1746" r="1.2"/><circle cx="2900" cy="1733" r="1.2"/><circle cx="2902" cy="1735" r="1.2"/></g>
<text x="3139" y="388" font-size="32.70" fill="#fff" textLength="230" lengthAdjust="spacingAndGlyphs" >TRADE HISTORY</text>
<text x="3130" y="452" font-size="27.62" fill="#fff" textLength="97" lengthAdjust="spacingAndGlyphs" >Amount</text>
<text x="3351" y="452" font-size="27.62" fill="#fff" textLength="61" lengthAdjust="spacingAndGlyphs" >Price</text>
<text x="3623" y="452" font-size="27.62" fill="#fff" textLength="59" lengthAdjust="spacingAndGlyphs" >Time</text>
<text x="3182" y="510" font-size="27.62" fill="#fff" text-anchor="middle" textLength="67" lengthAdjust="spacingAndGlyphs" >12.000</text>
<text x="3382" y="510" font-size="27.62" fill="#f0474f" text-anchor="middle" textLength="142" lengthAdjust="spacingAndGlyphs" >0.000110000</text>
<text x="3652" y="510" font-size="27.62" fill="#fff" text-anchor="middle" textLength="192" lengthAdjust="spacingAndGlyphs" >9:18:22 PM 11/25</text>
<text x="3182" y="565" font-size="27.62" fill="#fff" text-anchor="middle" textLength="67" lengthAdjust="spacingAndGlyphs" >21.000</text>
<text x="3382" y="565" font-size="27.62" fill="#3be3a0" text-anchor="middle" textLength="142" lengthAdjust="spacingAndGlyphs" >0.000120000</text>
<text x="3652" y="565" font-size="27.62" fill="#fff" text-anchor="middle" textLength="192" lengthAdjust="spacingAndGlyphs" >8:06:01 PM 11/25</text>
<text x="3166" y="626" font-size="27.62" fill="#fff" textLength="591" lengthAdjust="spacingAndGlyphs" >Note: Oxygen DEX will only show recent transactions.</text>
<defs><clipPath id="hdrclip"><rect x="0" y="66" width="3826" height="98"/></clipPath></defs>
<circle cx="1260" cy="97" r="29" fill="#3ee0b4"/><circle cx="1265" cy="97" r="22" fill="#141414"/><text x="1263" y="108" font-size="30" fill="#3ee0b4" text-anchor="middle">₴</text>
<g clip-path="url(#hdrclip)"><circle cx="1366" cy="109.5" r="41" fill="#3ee0b4"/><circle cx="1345" cy="109.5" r="39.0" fill="#141414" stroke="#3ee0b4" stroke-width="4"/><text x="1345" y="129.66" font-size="56" fill="#3ee0b4" text-anchor="middle">₺</text></g>
<g clip-path="url(#hdrclip)"><circle cx="2754" cy="119" r="53" fill="#3ee0b4"/><circle cx="2732" cy="119" r="51.0" fill="#141414" stroke="#3ee0b4" stroke-width="4"/><text x="2732" y="144.2" font-size="70" fill="#3ee0b4" text-anchor="middle">€</text></g>
<g clip-path="url(#hdrclip)"><circle cx="3148" cy="97" r="30" fill="#3ee0b4"/><circle cx="3134" cy="97" r="28.5" fill="#141414" stroke="#3ee0b4" stroke-width="3"/><text x="3134" y="111.4" font-size="40" fill="#3ee0b4" text-anchor="middle">₽</text></g>
<rect x="1475" y="80" width="5" height="5" fill="#e8b923"/>
<rect x="1580" y="83" width="5" height="5" fill="#e8b923"/>
<rect x="2428" y="89" width="5" height="5" fill="#e8b923"/>
<rect x="2531" y="91" width="5" height="5" fill="#e8b923"/>
<path d="M2326 131V143M2320 137H2332" stroke="#e8b923" stroke-width="3"/>
</svg>
</body></html>
